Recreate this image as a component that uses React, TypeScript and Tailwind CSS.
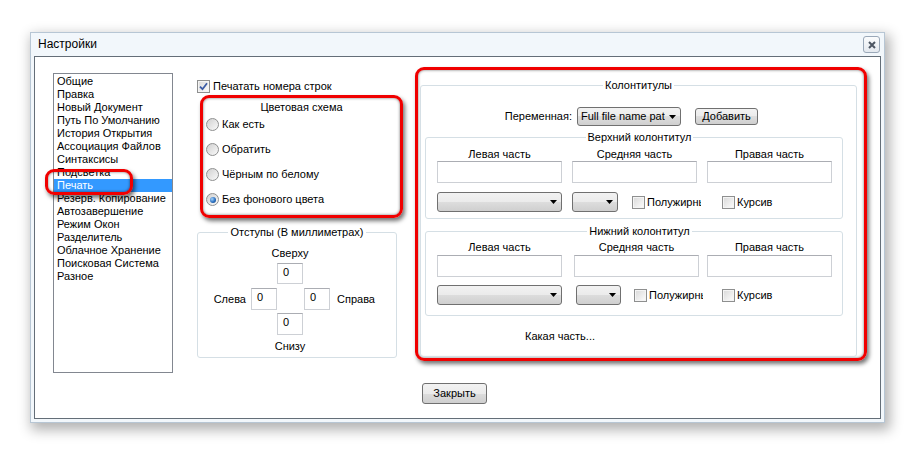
import React from "react";

const listItems = [
  "Общие",
  "Правка",
  "Новый Документ",
  "Путь По Умолчанию",
  "История Открытия",
  "Ассоциация Файлов",
  "Синтаксисы",
  "Подсветка",
  "Печать",
  "Резерв. Копирование",
  "Автозавершение",
  "Режим Окон",
  "Разделитель",
  "Облачное Хранение",
  "Поисковая Система",
  "Разное",
];

const redBox =
  "rounded-[9px] border-[3px] border-[#f00000] shadow-[2px_3px_4px_rgba(0,0,0,0.55),inset_0_0_3px_rgba(0,0,0,0.55)]";

const winButton =
  "rounded-[3px] border border-[#707070] bg-[linear-gradient(#f2f2f2,#ebebeb_50%,#dddddd_50%,#cfcfcf)]";

function CheckBox({ checked = false }: { checked?: boolean }) {
  return (
    <span className="flex h-[13px] w-[13px] shrink-0 items-center justify-center border border-[#8e8f8f] bg-[linear-gradient(135deg,#d8d8d8,#fdfdfd)] shadow-[inset_0_0_0_1px_#f4f4f4]">
      {checked && (
        <svg width="9" height="9" viewBox="0 0 9 9">
          <path d="M1 4.6 L3.5 7.2 L8 1.3" fill="none" stroke="#3b5ba5" strokeWidth="1.8" />
        </svg>
      )}
    </span>
  );
}

function Radio({ checked = false, label }: { checked?: boolean; label: string }) {
  return (
    <div className="flex h-[13px] items-center">
      <span className="flex h-[13px] w-[13px] shrink-0 items-center justify-center rounded-full border border-[#8e8f8f] bg-[linear-gradient(135deg,#d0d0d0,#fafafa)]">
        {checked && (
          <span className="h-[6px] w-[6px] rounded-full bg-[radial-gradient(circle_at_35%_35%,#a6d4fb,#2a6fc0_55%,#0e3a70)]" />
        )}
      </span>
      <span className="ml-[3px] whitespace-nowrap">{label}</span>
    </div>
  );
}

function Combo({ className, text = "", textWidth = "" }: { className: string; text?: string; textWidth?: string }) {
  return (
    <div className={`flex shrink-0 items-center justify-between ${winButton} ${className}`}>
      <span className={`overflow-hidden whitespace-nowrap pl-[3px] ${textWidth}`}>{text}</span>
      <svg className="mr-[4px] shrink-0" width="7" height="4" viewBox="0 0 7 4">
        <path d="M0 0h7L3.5 4z" fill="#000" />
      </svg>
    </div>
  );
}

function TextBox({ className, value = "" }: { className: string; value?: string }) {
  return (
    <div className={`shrink-0 border border-[#cdd0d5] border-t-[#abadb3] bg-white pl-[5px] pt-[2px] ${className}`}>
      {value}
    </div>
  );
}

function FooterGroup({ title, lower = false }: { title: string; lower?: boolean }) {
  return (
    <fieldset
      className={`ml-[4px] w-[418px] rounded-[3px] border border-[#d5dfe5] pl-[11px] ${
        lower ? "mt-[6px] pb-[10px]" : "mt-[5px] pb-[6px]"
      }`}
    >
      <legend className="mx-auto px-[2px] leading-[13px]">{title}</legend>
      <div className={`flex ${lower ? "mt-[3px]" : "mt-[4px]"}`}>
        <div className="w-[125px] text-center">Левая часть</div>
        <div className={`w-[125px] text-center ${lower ? "ml-[12px]" : "ml-[10px]"}`}>Средняя часть</div>
        <div className={`w-[125px] text-center ${lower ? "ml-[8px]" : "ml-[10px]"}`}>Правая часть</div>
      </div>
      <div className={`flex ${lower ? "mt-[1px]" : ""}`}>
        <TextBox className="h-[22px] w-[125px]" />
        <TextBox className={`h-[22px] w-[125px] ${lower ? "ml-[12px]" : "ml-[10px]"}`} />
        <TextBox className={`h-[22px] w-[125px] ${lower ? "ml-[8px]" : "ml-[10px]"}`} />
      </div>
      <div className={`flex items-center ${lower ? "mt-[8px]" : "mt-[9px]"}`}>
        <Combo className="h-[20px] w-[125px]" />
        <Combo className={lower ? "ml-[14px] h-[20px] w-[45px]" : "ml-[10px] h-[20px] w-[46px]"} />
        <div className={`flex items-center ${lower ? "ml-[13px] w-[88px]" : "ml-[14px] w-[90px]"}`}>
          <CheckBox />
          <span className="ml-[2px] w-[54px] overflow-hidden whitespace-nowrap">Полужирный</span>
        </div>
        <div className="flex items-center">
          <CheckBox />
          <span className="ml-[2px]">Курсив</span>
        </div>
      </div>
    </fieldset>
  );
}

export default function App() {
  return (
    <div className="h-[454px] w-[917px] bg-white pl-[30px] pt-[32px] font-['Liberation_Sans',Arial,sans-serif] text-[11px] leading-[13px] text-black">
      <div className="flex h-[391px] w-[855px] flex-col border border-[#b7c6d4] bg-[#f2f7fb] px-[3px] pb-[3px] shadow-[3px_5px_12px_2px_rgba(0,0,0,0.3)]">
        {/* title bar */}
        <div className="flex h-[23px] shrink-0 items-center justify-between pl-[4px] pr-[1px]">
          <span className="text-[12px]">Настройки</span>
          <span className="flex h-[17px] w-[17px] items-center justify-center rounded-[3px] border border-[#9aa8b8] bg-[linear-gradient(#fbfcfd,#e4e9ef)]">
            <svg width="8" height="8" viewBox="0 0 8 8">
              <path d="M1 1L7 7M7 1L1 7" stroke="#4d5663" strokeWidth="2" />
            </svg>
          </span>
        </div>

        {/* body */}
        <div className="flex h-[363px] flex-col border border-[#646e78] bg-white">
          <div className="flex items-start">
            {/* list of sections */}
            <div className="relative ml-[18px] mt-[16px] h-[300px] w-[120px] shrink-0 border border-[#828790] bg-white pt-[1px]">
              {listItems.map((item) => (
                <div
                  key={item}
                  className={`h-[13px] whitespace-nowrap pl-[3px] leading-[13px] ${
                    item === "Печать" ? "bg-[#3399ff] text-white" : ""
                  }`}
                >
                  {item}
                </div>
              ))}
              <div className={`pointer-events-none absolute left-[-9px] top-[95px] h-[26px] w-[88px] ${redBox}`} />
            </div>

            {/* middle column */}
            <div className="ml-[24px] mt-[23px] w-[206px] shrink-0">
              <div className="flex h-[13px] items-center">
                <CheckBox checked />
                <span className="ml-[3px]">Печатать номера строк</span>
              </div>

              <div className={`ml-[3px] mt-[2px] flex h-[123px] w-[203px] flex-col pt-[3px] ${redBox}`}>
                <div className="text-center">Цветовая схема</div>
                <div className="mt-[4px] flex flex-col gap-[12px] pl-[3px]">
                  <Radio label="Как есть" />
                  <Radio label="Обратить" />
                  <Radio label="Чёрным по белому" />
                  <Radio label="Без фонового цвета" checked />
                </div>
              </div>

              <fieldset className="mt-[8px] h-[132px] w-[200px] rounded-[3px] border border-[#d5dfe5]">
                <legend className="mx-auto px-[2px] leading-[13px]">Отступы (В миллиметрах)</legend>
                <div className="ml-[79px] mt-[8px] flex w-[26px] justify-center whitespace-nowrap">Сверху</div>
                <TextBox className="ml-[79px] mt-[3px] h-[21px] w-[26px]" value="0" />
                <div className="mt-[4px] flex items-center">
                  <div className="w-[48px] text-right">Слева</div>
                  <TextBox className="ml-[5px] h-[22px] w-[26px]" value="0" />
                  <TextBox className="ml-[27px] h-[22px] w-[26px]" value="0" />
                  <div className="ml-[7px]">Справа</div>
                </div>
                <TextBox className="ml-[79px] mt-[3px] h-[22px] w-[26px]" value="0" />
                <div className="ml-[79px] mt-[5px] flex w-[26px] justify-center whitespace-nowrap">Снизу</div>
              </fieldset>
            </div>

            {/* headers and footers */}
            <div className={`ml-[12px] mt-[10px] h-[294px] w-[452px] shrink-0 pl-[2px] pt-[9px] ${redBox}`}>
              <fieldset className="h-[278px] w-[437px] rounded-[3px] border border-[#d5dfe5]">
                <legend className="mx-auto px-[2px] leading-[13px]">Колонтитулы</legend>
                <div className="mt-[15px] flex items-center">
                  <div className="w-[151px] text-right">Переменная:</div>
                  <Combo
                    className="ml-[5px] h-[19px] w-[104px]"
                    text="Full file name path"
                    textWidth="w-[87px]"
                  />
                  <button className={`ml-[14px] h-[17px] w-[63px] leading-[13px] ${winButton}`}>Добавить</button>
                </div>

                <FooterGroup title="Верхний колонтитул" />
                <FooterGroup title="Нижний колонтитул" lower />

                <div className="ml-[104px] mt-[14px]">Какая часть...</div>
              </fieldset>
            </div>
          </div>

          <button className={`ml-[387px] mt-[10px] h-[21px] w-[65px] leading-[13px] ${winButton}`}>Закрыть</button>
        </div>
      </div>
    </div>
  );
}
